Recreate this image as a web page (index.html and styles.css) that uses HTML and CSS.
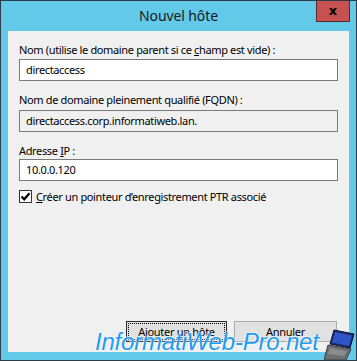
FILE: index.html
```html
<!DOCTYPE html>
<html lang="fr">
<head>
  <meta charset="UTF-8" />
  <title>Nouvel hôte</title>
  <link rel="stylesheet" href="styles.css">
</head>
<body>
  <div class="window">
    <div class="titlebar">
      <span class="title">Nouvel hôte</span>
      <button class="close">x</button>
    </div>

    <div class="content">
      <label class="label first">Nom (utilise le domaine parent si ce <u>c</u>hamp est vide) :</label>
      <div class="field">directaccess</div>

      <label class="label second">Nom de domaine pleinement qualifié (FQDN) :</label>
      <div class="field readonly">directaccess.corp.informatiweb.lan.</div>

      <label class="label third">Adresse <u>I</u>P :</label>
      <div class="field">10.0.0.120</div>

      <div class="check-row">
        <span class="checkbox">
          <svg width="11" height="11" viewBox="0 0 11 11"><path d="M1.5 5.5 L4.2 8.3 L9.5 2.2" fill="none" stroke="#000" stroke-width="2.2"/></svg>
        </span>
        <span><u>C</u>réer un pointeur d’enregistrement PTR associé</span>
      </div>

      <div class="buttons">
        <button class="btn default"><span>Ajouter un hôte</span></button>
        <button class="btn cancel">Annuler</button>
      </div>

      <div class="watermark">InformatiWeb-Pro.net</div>
    </div>

    <svg class="laptop" width="34" height="34" viewBox="0 0 34 34">
      <path d="M10 4 L30 8 L26 22 L6 18 Z" fill="#1c2a6e" stroke="#0c1330" stroke-width="1"/>
      <path d="M11 6 L28 9.5 L25 20 L8 16.5 Z" fill="#2f54c8"/>
      <path d="M4 19 L27 23 L22 34 L0 34 Z" fill="#6d6f73" stroke="#3b3d40" stroke-width="1"/>
      <path d="M6 22 L23 25 L20 30 L4 28 Z" fill="#8a8c90"/>
    </svg>
  </div>
</body>
</html>
```

FILE: styles.css
```css
* {
  box-sizing: border-box;
}

body {
  margin: 0;
  font-family: 'Noto Sans', 'Open Sans', sans-serif;
  font-size: 11px;
  letter-spacing: -0.35px;
  color: #000;
}

.window {
  position: relative;
  width: 357px;
  height: 361px;
  border: 1px solid #2b3c46;
  background-color: #62c9e9;
  padding: 0 7px 8px;
  display: flex;
  flex-direction: column;
  overflow: hidden;
}

.titlebar {
  position: relative;
  height: 30px;
  display: flex;
  justify-content: center;
  align-items: center;
  flex-shrink: 0;
}

.title {
  font-size: 14px;
  letter-spacing: -0.1px;
  color: #1a1a1a;
  margin-top: -1px;
}

.close {
  position: absolute;
  top: -1px;
  right: -1px;
  width: 34px;
  height: 22px;
  background-color: #c75050;
  border: 1px solid #5a2a2a;
  border-top: none;
  color: #000;
  font-family: 'DejaVu Sans', sans-serif;
  font-weight: bold;
  font-size: 13px;
  line-height: 18px;
  letter-spacing: 0;
  padding: 0;
}

.content {
  position: relative;
  flex: 1;
  background-color: #f0f0f0;
  padding: 0 11px 10px;
  display: flex;
  flex-direction: column;
}

.label {
  display: block;
  line-height: 15px;
  white-space: nowrap;
}

.label.first {
  margin-top: 11px;
  margin-bottom: 2px;
}

.label.second {
  margin-top: 11px;
  margin-bottom: 3px;
}

.label.third {
  margin-top: 11px;
  margin-bottom: 1px;
}

.field {
  height: 22px;
  border: 1px solid #7a7a7a;
  background-color: #fff;
  padding: 0 6px;
  line-height: 20px;
  white-space: nowrap;
}

.field.readonly {
  background-color: #f0f0f0;
}

.check-row {
  display: flex;
  align-items: center;
  gap: 4px;
  margin-top: 9px;
  line-height: 13px;
}

.checkbox {
  width: 13px;
  height: 13px;
  border: 1px solid #333;
  background-color: #fff;
  display: flex;
  align-items: center;
  justify-content: center;
}

.buttons {
  margin-top: auto;
  display: flex;
  justify-content: flex-end;
  gap: 7px;
  padding-right: 1px;
}

.btn {
  height: 21px;
  background-color: #e1e1e1;
  border: 1px solid #adadad;
  font-family: inherit;
  font-size: 11px;
  letter-spacing: -0.3px;
  color: #000;
  padding: 1px;
}

.btn.default {
  width: 101px;
  border-color: #2a2a2a;
}

.btn.default span {
  display: block;
  height: 100%;
  border: 1px dotted #000;
  line-height: 15px;
}

.btn.cancel {
  width: 103px;
}

.watermark {
  position: absolute;
  left: 87px;
  bottom: -4px;
  font-family: 'Liberation Sans', Arial, sans-serif;
  font-style: italic;
  font-size: 24px;
  color: #1f9cf0;
  text-shadow: 0 0 2px #fff, 0 0 2px #fff;
  white-space: nowrap;
  letter-spacing: -0.2px;
}

.laptop {
  position: absolute;
  right: -2px;
  bottom: 0;
}
```
